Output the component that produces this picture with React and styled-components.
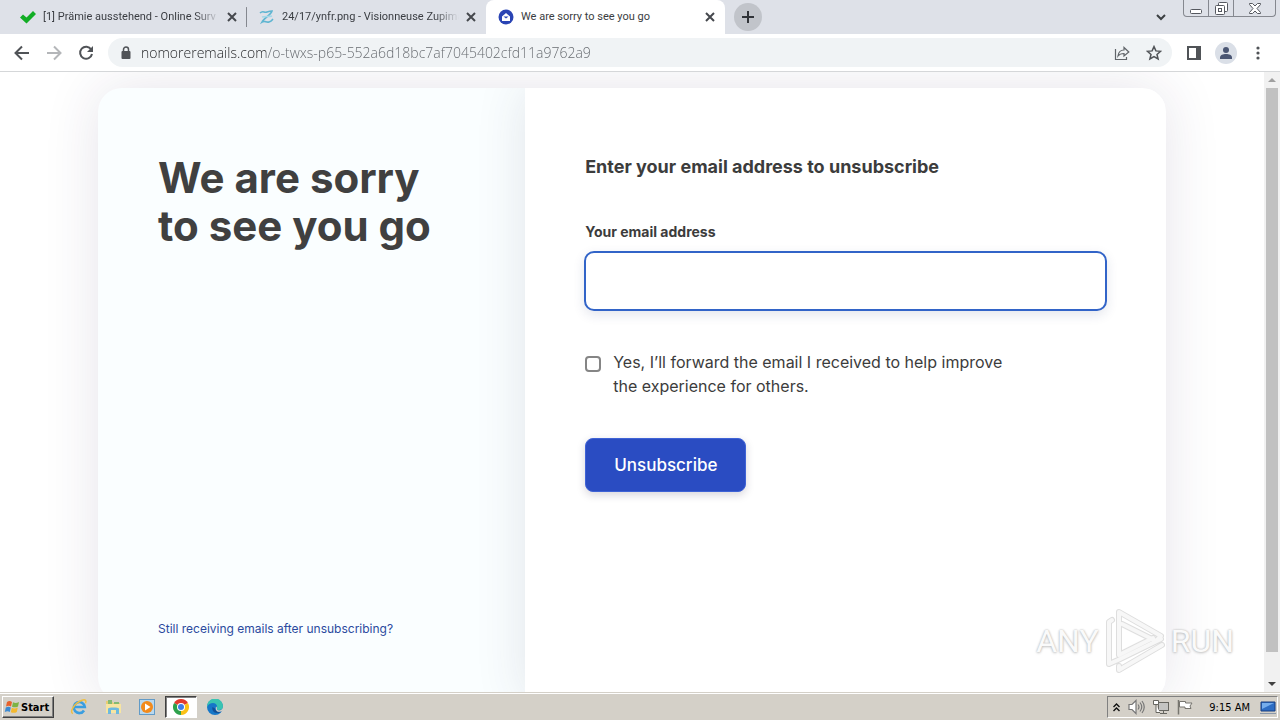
import React from "react";
import styled, { createGlobalStyle } from "styled-components";

const App = () => {
  return (
    <Desktop>
      <GlobalStyle />
      <TabStrip>
        {tabs.map((tab) => {
          return (
            <Tab key={tab.title} $active={tab.active} $divider={tab.divider}>
              {tab.icon}
              <TabTitle $faded={!tab.active}>{tab.title}</TabTitle>
              <PlainButton aria-label="Close tab">
                <CloseIcon />
              </PlainButton>
            </Tab>
          );
        })}
        <NewTab aria-label="New tab">
          <svg width="12" height="12" viewBox="0 0 12 12">
            <path d="M6 0v12M0 6h12" stroke="#303338" strokeWidth="2" />
          </svg>
        </NewTab>
        <TabSearch aria-label="Search tabs">
          <svg width="10" height="7" viewBox="0 0 10 7">
            <path d="M1 1l4 4 4-4" fill="none" stroke="#3c4043" strokeWidth="2" />
          </svg>
        </TabSearch>
        <WindowControls>
          <WindowButton $width={24} aria-label="Minimize">
            <svg width="12" height="12" viewBox="0 0 12 12">
              <rect x="0.5" y="7.5" width="11" height="4" rx="1" fill="#fff" stroke="#55585f" />
            </svg>
          </WindowButton>
          <WindowButton $width={25} aria-label="Restore">
            <svg width="13" height="13" viewBox="0 0 13 13">
              <rect x="3.5" y="0.5" width="9" height="9" rx="1" fill="#fff" stroke="#55585f" />
              <rect x="0.5" y="3.5" width="9" height="9" rx="1" fill="#fff" stroke="#55585f" />
              <rect x="3.5" y="6.5" width="3" height="3" fill="#fff" stroke="#55585f" />
            </svg>
          </WindowButton>
          <WindowButton $width={42} aria-label="Close">
            <svg width="12" height="11" viewBox="0 0 12 11">
              <path
                d="M.5.5h3L6 3 8.500.5h3v1L8 5.500l3.500 4v1h-3L6 8l-2.500 2.500h-3v-1l3.500-4-3.500-4z"
                fill="#fff"
                stroke="#55585f"
              />
            </svg>
          </WindowButton>
        </WindowControls>
      </TabStrip>

      <Toolbar>
        <ToolButton aria-label="Back">
          <ArrowIcon color="#505357" d="M15 8H2M8 1.500L1.500 8 8 14.500" />
        </ToolButton>
        <ToolButton aria-label="Forward">
          <ArrowIcon color="#b4b6b9" d="M1 8h13M8 1.500L14.500 8 8 14.500" />
        </ToolButton>
        <ToolButton aria-label="Reload">
          <svg width="16" height="16" viewBox="0 0 16 16">
            <path d="M13.200 4.500A6 6 0 1 0 14 9" fill="none" stroke="#505357" strokeWidth="2" />
            <path d="M15 1v6H9z" fill="#505357" />
          </svg>
        </ToolButton>
        <Omnibox>
          <svg width="12" height="14" viewBox="0 0 12 14">
            <rect x="1.500" y="5" width="9" height="8" rx="1" fill="#505357" />
            <path d="M3.500 6V3.500a2.500 2.500 0 0 1 5 0V6" fill="none" stroke="#505357" strokeWidth="1.500" />
          </svg>
          <Address
            aria-label="Address bar"
            defaultValue="nomoreremails.com/o-twxs-p65-552a6d18bc7af7045402cfd11a9762a9"
          />
          <ToolButton aria-label="Share">
            <svg width="16" height="16" viewBox="0 0 16 16" fill="none" stroke="#606469" strokeWidth="1.200">
              <path d="M1.500 4v10.500h11V12" />
              <path d="M4 11c.5-4 2.500-6 6-6V2.500L14.800 7 10 11V8.500C7.500 8.500 5.500 9 4 11z" />
            </svg>
          </ToolButton>
          <ToolButton aria-label="Bookmark this tab">
            <svg width="16" height="16" viewBox="0 0 16 16">
              <path
                d="M8 1.600l1.900 4.300 4.700.4-3.600 3.100 1.100 4.600L8 11.600 3.900 14 5 9.400 1.400 6.300l4.700-.4z"
                fill="none"
                stroke="#505357"
                strokeWidth="1.500"
              />
            </svg>
          </ToolButton>
        </Omnibox>
        <ToolButton aria-label="Side panel">
          <svg width="14" height="14" viewBox="0 0 14 14">
            <path d="M0 0h14v14H0zM2 2v10h7V2z" fill="#505357" fillRule="evenodd" />
          </svg>
        </ToolButton>
        <ToolButton aria-label="Profile">
          <svg width="22" height="22" viewBox="0 0 22 22">
            <circle cx="11" cy="11" r="11" fill="#dadfe7" />
            <circle cx="11" cy="8" r="3" fill="#4a5673" />
            <path d="M5 17v-1.500c0-2.500 3-3.500 6-3.500s6 1 6 3.500V17z" fill="#4a5673" />
          </svg>
        </ToolButton>
        <ToolButton aria-label="Menu">
          <svg width="4" height="14" viewBox="0 0 4 14" fill="#505357">
            <circle cx="2" cy="2" r="1.600" />
            <circle cx="2" cy="7" r="1.600" />
            <circle cx="2" cy="12" r="1.600" />
          </svg>
        </ToolButton>
      </Toolbar>

      <Viewport>
        <Page>
          <Card>
            <Intro>
              <Title>
                We are sorry
                <br />
                to see you go
              </Title>
              <HelpLink href="#help">Still receiving emails after unsubscribing?</HelpLink>
            </Intro>
            <FormPanel onSubmit={(e) => e.preventDefault()}>
              <FormTitle>Enter your email address to unsubscribe</FormTitle>
              <FieldLabel htmlFor="email">Your email address</FieldLabel>
              <EmailInput id="email" type="email" />
              <CheckRow>
                <Checkbox id="forward" type="checkbox" />
                <CheckLabel htmlFor="forward">
                  Yes, I’ll forward the email I received to help improve the experience for others.
                </CheckLabel>
              </CheckRow>
              <SubmitButton type="submit">Unsubscribe</SubmitButton>
            </FormPanel>
          </Card>
        </Page>
        <Scrollbar>
          <ScrollArrow aria-label="Scroll up">
            <svg width="8" height="4" viewBox="0 0 8 4">
              <path d="M4 0l4 4H0z" fill="#a0a0a0" />
            </svg>
          </ScrollArrow>
          <ScrollTrack>
            <ScrollThumb />
          </ScrollTrack>
          <ScrollArrow aria-label="Scroll down">
            <svg width="8" height="4" viewBox="0 0 8 4">
              <path d="M0 0h8L4 4z" fill="#404040" />
            </svg>
          </ScrollArrow>
        </Scrollbar>
        <Watermark>
          <span>ANY</span>
          <svg width="60" height="66" viewBox="0 0 60 66" fill="none" strokeLinejoin="round" strokeLinecap="round">
            <path d={playMark} stroke="#dedede" strokeWidth="6" />
            <path d={playMark} stroke="#f7f7f7" strokeWidth="4" />
          </svg>
          <span>RUN</span>
        </Watermark>
      </Viewport>

      <Taskbar>
        <StartButton>
          <svg width="16" height="16" viewBox="0 0 16 16">
            <path d="M3 3c2-1.500 3.500-1 5 0L7 7.500C5.500 6.500 4 6.500 2 7.500z" fill="#e8622c" />
            <path d="M9 3.300c2 1 3.500 1 6-.3L14 7.500c-2 1.200-4 1-6 .2z" fill="#7db343" />
            <path d="M1.800 8.500c2-1.200 3.500-1 5 0L5.800 13c-1.500-1-3-1-5 0z" fill="#3c8ad2" />
            <path d="M7.800 8.700c2 1 3.500 1 6-.2l-1 4.500c-2 1.200-4 1-6 .2z" fill="#f4b92f" />
          </svg>
          Start
        </StartButton>
        <QuickLaunch>
          <TaskButton aria-label="Internet Explorer">
            <svg width="18" height="18" viewBox="0 0 18 18" fill="none">
              <path d="M14 12.500a5.500 5.500 0 1 1 .8-3.500H5" stroke="#3a9ee0" strokeWidth="2.600" />
              <path d="M3 15.500C-1 15 4 5 12 2.200c4-1.200 4.500.8 3.500 3" stroke="#efbe42" strokeWidth="1.500" />
            </svg>
          </TaskButton>
          <TaskButton aria-label="File Explorer">
            <svg width="17" height="16" viewBox="0 0 17 16">
              <path d="M1 2h6l1 2h7v9H1z" fill="#e9cd72" />
              <path d="M3 1h4v4H3zM9 3h5v3H9z" fill="#85ba72" />
              <path d="M1 5h15v9H1z" fill="#f7e5a1" />
              <path d="M3 15V9.500C3 8 14 8 14 9.500V15h-3v-4H6v4z" fill="#6db9df" />
            </svg>
          </TaskButton>
          <TaskButton aria-label="Media Player">
            <svg width="16" height="16" viewBox="0 0 16 16">
              <rect x="0.500" y="0.500" width="15" height="15" fill="#b9d8ee" stroke="#629bc7" />
              <circle cx="8" cy="8" r="6" fill="#f28a1b" />
              <path d="M6 4.500L11.500 8 6 11.500z" fill="#fff" />
            </svg>
          </TaskButton>
          <TaskButton $pressed aria-label="Chrome">
            <svg width="16" height="16" viewBox="0 0 16 16">
              <path d="M8 8L1.070 4A8 8 0 0 1 14.930 4z" fill="#e33b2e" />
              <path d="M8 8V16A8 8 0 0 1 1.070 4z" fill="#2ea14c" />
              <path d="M8 8l6.930-4A8 8 0 0 1 8 16z" fill="#fbc116" />
              <circle cx="8" cy="8" r="4" fill="#fff" />
              <circle cx="8" cy="8" r="3" fill="#3f7de8" />
            </svg>
          </TaskButton>
          <TaskButton aria-label="Edge">
            <svg width="16" height="16" viewBox="0 0 16 16">
              <circle cx="8" cy="8" r="8" fill="#1677c8" />
              <path d="M0 8a8 8 0 0 1 16-1c0 3-2 4-4 4-2 0-2.500-1-2-2 .8-3-1.500-5-4-5S1 5.500 0 8z" fill="#39c4b1" />
              <path d="M5.500 8c-1 3 1.500 6 4.500 6 2 0 3-.5 4.500-1.800C11 13 8 11.500 8 9.500z" fill="#124f96" />
              <path d="M9 7.500c2 1.500 0 2.500 1.500 3.500s5.500 0 5.500-3v3.500l-2 1c-4 1-6-1-5-5z" fill="#d4d0c8" />
            </svg>
          </TaskButton>
        </QuickLaunch>
        <Tray>
          <svg width="7" height="9" viewBox="0 0 7 9" fill="none" stroke="#111" strokeWidth="1.400">
            <path d="M.5 4l3-3 3 3M.5 8l3-3 3 3" />
          </svg>
          <svg width="17" height="16" viewBox="0 0 17 16" fill="none" stroke="#777" strokeWidth="1.200">
            <path d="M1 5.500h3l4-4v13l-4-4H1z" fill="#fff" />
            <path d="M10 5.500q2 2.500 0 5M12 3.500q3.500 4.500 0 9M14 2q4.500 6 0 12" />
          </svg>
          <svg width="16" height="16" viewBox="0 0 16 16" fill="#fff" stroke="#66655f">
            <rect x="5.500" y="3.500" width="10" height="8" fill="#c4c4c2" />
            <path d="M7 14.500h7M10.500 12v2" />
            <path d="M.5 1.500h5v4h-5zM3 6v7.500h4" />
          </svg>
          <svg width="16" height="16" viewBox="0 0 16 16" fill="#fff" stroke="#77756f">
            <path d="M1.500 1v14.500" strokeWidth="1.500" />
            <path d="M2.500 2.500h6v1.500h6.500l-2 3 1 2.500H8V8H2.500z" />
          </svg>
          <Clock>9:15 AM</Clock>
          <svg width="16" height="13" viewBox="0 0 16 13">
            <path d="M1 1h14v9H1z" fill="#2d6dc4" stroke="#183f80" />
            <path d="M2 2h12L2 8z" fill="#75adec" />
            <path d="M0 12.500h16" stroke="#8a98aa" />
          </svg>
        </Tray>
      </Taskbar>
    </Desktop>
  );
};

export default App;

const playMark = "M14 47V4l42 24-5 5-34-17M7 12L4 14v42l9-4 43-21M14 47l34-17M14 58v4l43-25";

const CloseIcon = () => (
  <svg width="10" height="10" viewBox="0 0 10 10">
    <path d="M1 1l8 8M9 1L1 9" stroke="#45484d" strokeWidth="2" />
  </svg>
);

const ArrowIcon = ({ color, d }) => (
  <svg width="16" height="16" viewBox="0 0 16 16">
    <path d={d} fill="none" stroke={color} strokeWidth="2" />
  </svg>
);

const tabs = [
  {
    title: "[1] Prämie ausstehend - Online Surv",
    divider: true,
    icon: (
      <svg width="16" height="16" viewBox="0 0 16 16">
        <path d="M0 8.500L3 5.500 6.500 8.500 13 2l3 3-9.500 9.500z" fill="#12ad25" />
      </svg>
    ),
  },
  {
    title: "24/17/ynfr.png - Visionneuse Zupima",
    icon: (
      <svg width="16" height="16" viewBox="0 0 16 16" fill="none" stroke="#5fb5d1" strokeWidth="1.600">
        <path d="M1 4c3-3 4 0 7-1s4-1 5-1C12 6 5 9 3 13c3-2 4 1 7 0s3-2 4-3" />
        <path d="M3 8c3-1 7 0 10-1" stroke="#a3d8e8" />
      </svg>
    ),
  },
  {
    title: "We are sorry to see you go",
    active: true,
    icon: (
      <svg width="16" height="16" viewBox="0 0 16 16">
        <circle cx="8" cy="8" r="7.500" fill="#2a44b4" />
        <path d="M4 7.500L8 4l4 3.500V12H4z" fill="#fff" />
        <path d="M5.500 7.500h5L8 9.500z" fill="#2a44b4" />
      </svg>
    ),
  },
];

const GlobalStyle = createGlobalStyle`
  * {
    box-sizing: border-box;
  }

  body {
    margin: 0;
    background: white;
    font-family: "Inter", sans-serif;
    color: #3c3c3c;
  }

  svg {
    flex: none;
    display: block;
  }
`;

const Desktop = styled.div`
  display: flex;
  flex-direction: column;
  height: 100vh;
  overflow: hidden;
`;

const PlainButton = styled.button`
  display: flex;
  justify-content: center;
  align-items: center;
  flex: none;
  padding: 0;
  border: none;
  background: transparent;
`;

const TabStrip = styled.div`
  display: flex;
  align-items: center;
  height: 34px;
  flex: none;
  padding: 0 4px 0 8px;
  background: #dee1e8;
`;

const Tab = styled.div`
  display: flex;
  align-items: center;
  gap: 7px;
  flex: 0 1 239px;
  min-width: 0;
  height: 34px;
  padding: 0 10px 0 12px;
  border-radius: 8px 8px 0 0;
  background: ${(props) => (props.$active ? "white" : "transparent")};

  ${(props) =>
    props.$divider &&
    `
    background: linear-gradient(#85888f, #85888f) right center / 1px 20px no-repeat;
  `}
`;

const TabTitle = styled.span`
  flex: 1;
  min-width: 0;
  white-space: nowrap;
  font-family: "Roboto", sans-serif;
  font-size: 11px;
  line-height: 16px;
  color: #3a3d42;
  mask-image: ${(props) => (props.$faded ? "linear-gradient(to right, black 86%, transparent)" : "none")};
`;

const NewTab = styled(PlainButton)`
  width: 28px;
  height: 28px;
  margin-left: 9px;
  border-radius: 50%;
  background: #c1c4ca;
`;

const TabSearch = styled(PlainButton)`
  width: 28px;
  height: 28px;
  margin: 0 8px 0 auto;
`;

const WindowControls = styled.div`
  display: flex;
  align-self: flex-start;
  height: 17px;
  border: 1px solid #85888f;
  border-top: none;
  border-radius: 0 0 4px 4px;
`;

const WindowButton = styled(PlainButton)`
  width: ${(props) => props.$width}px;

  & + & {
    border-left: 1px solid #85888f;
  }
`;

const Toolbar = styled.div`
  display: flex;
  align-items: center;
  height: 38px;
  flex: none;
  padding: 0 6px;
  border-bottom: 1px solid #d5d7d9;
  background: white;
`;

const ToolButton = styled(PlainButton)`
  width: 32px;
  height: 28px;
`;

const Omnibox = styled.div`
  display: flex;
  align-items: center;
  flex: 1;
  height: 29px;
  margin: 0 6px;
  padding: 0 2px 0 12px;
  border-radius: 15px;
  background: #f0f3f5;
`;

const Address = styled.input`
  flex: 1;
  min-width: 0;
  margin-left: 9px;
  padding: 0;
  border: none;
  outline: none;
  font-family: "Open Sans", sans-serif;
  font-size: 14px;
  font-weight: 300;
  line-height: 20px;
  color: transparent;
  background: linear-gradient(to right, #202124 125px, #62666b 125px);
  background-clip: text;
`;

const Viewport = styled.main`
  position: relative;
  display: flex;
  flex: 1;
  min-height: 0;
`;

const Page = styled.div`
  flex: 1;
  height: 100%;
  overflow: hidden;
  padding: 16px 98px;
`;

const Card = styled.section`
  display: grid;
  grid-template-columns: 2fr 3fr;
  min-height: calc(100% + 25px);
  border-radius: 24px;
  overflow: hidden;
  background: #fafeff;
  box-shadow: 0 0 56px rgba(50, 30, 80, 0.12);
`;

const Intro = styled.div`
  display: flex;
  flex-direction: column;
  justify-content: space-between;
  align-items: flex-start;
  padding: 66px 60px 64px;
`;

const Title = styled.h1`
  margin: 0;
  font-size: 42px;
  font-weight: 700;
  line-height: 48px;
  white-space: nowrap;
  color: #404040;
`;

const HelpLink = styled.a`
  font-size: 12px;
  line-height: 16px;
  color: #2b4a9e;
  text-decoration: none;
`;

const FormPanel = styled.form`
  display: flex;
  flex-direction: column;
  align-items: flex-start;
  padding: 66px 59px;
  background: white;
  box-shadow: 0 0 48px rgba(50, 50, 80, 0.12);
`;

const FormTitle = styled.h2`
  margin: 0 1px 41px;
  font-size: 18px;
  font-weight: 700;
  line-height: 26px;
`;

const FieldLabel = styled.label`
  margin: 0 1px 8px;
  font-size: 14px;
  font-weight: 700;
  line-height: 22px;
`;

const EmailInput = styled.input`
  width: 100%;
  height: 60px;
  margin-bottom: 39px;
  padding: 0 16px;
  border: 2px solid #3264c8;
  border-radius: 10px;
  outline: none;
  font: inherit;
  background: white;
  box-shadow: 0 4px 12px rgba(30, 50, 110, 0.12);
`;

const CheckRow = styled.div`
  display: flex;
  align-items: flex-start;
  gap: 12px;
  margin: 0 1px 40px;
`;

const Checkbox = styled.input`
  appearance: none;
  flex: none;
  width: 16px;
  height: 16px;
  margin: 6px 0 0;
  border: 2px solid #858585;
  border-radius: 4px;
  background: white;
`;

const CheckLabel = styled.label`
  max-width: 400px;
  font-size: 16px;
  line-height: 24px;
`;

const SubmitButton = styled.button`
  height: 54px;
  margin: 0 1px;
  padding: 0 28px;
  border: 1px solid #3f63d6;
  border-radius: 8px;
  font-family: inherit;
  font-size: 17px;
  font-weight: 500;
  color: white;
  background: #2a4cc2;
  box-shadow: 0 3px 8px rgba(40, 30, 60, 0.18);
`;

const Scrollbar = styled.div`
  display: flex;
  flex-direction: column;
  width: 16px;
  background: #f1f1f1;
`;

const ScrollArrow = styled(PlainButton)`
  height: 16px;
`;

const ScrollTrack = styled.div`
  flex: 1;
  padding: 0 2px;
`;

const ScrollThumb = styled.div`
  height: 96%;
  background: #c1c1c1;
`;

const Watermark = styled.div`
  position: absolute;
  right: 46px;
  bottom: 18px;
  display: flex;
  align-items: center;
  gap: 6px;
  font-family: "Roboto", sans-serif;
  font-size: 32px;
  line-height: 64px;
  color: #fafafa;
  text-shadow: 0 0 2px #b4b4b4, 0 1px 3px #cccccc;
`;

const Taskbar = styled.footer`
  display: flex;
  align-items: center;
  height: 28px;
  flex: none;
  padding: 1px 2px 0 2px;
  border-top: 1px solid #d4d0c8;
  background: #d4d0c8;
  box-shadow: inset 0 1px white;
  font-family: "DejaVu Sans Condensed", "DejaVu Sans", sans-serif;
  font-size: 11px;
  color: black;
`;

const StartButton = styled.button`
  display: flex;
  align-items: center;
  gap: 1px;
  width: 52px;
  height: 22px;
  padding: 0 0 0 1px;
  border: 1px solid;
  border-color: white #404040 #404040 white;
  font: inherit;
  font-weight: 700;
  color: black;
  background: #d4d0c8;
  box-shadow: inset -1px -1px #808080;
`;

const QuickLaunch = styled.div`
  display: flex;
  gap: 2px;
  flex: 1;
  margin-left: 9px;
`;

const TaskButton = styled(PlainButton)`
  width: 32px;
  height: 22px;
  border: 1px solid transparent;

  ${(props) =>
    props.$pressed &&
    `
    border-color: #404040 white white #404040;
    background: white;
    box-shadow: inset 1px 1px #808080;
  `}
`;

const Tray = styled.div`
  display: flex;
  align-items: center;
  gap: 8px;
  height: 22px;
  padding: 0 1px 0 5px;
  border: 1px solid;
  border-color: #808080 white white #808080;
`;

const Clock = styled.span`
  margin: 0 2px 0 8px;
  white-space: nowrap;
`;
